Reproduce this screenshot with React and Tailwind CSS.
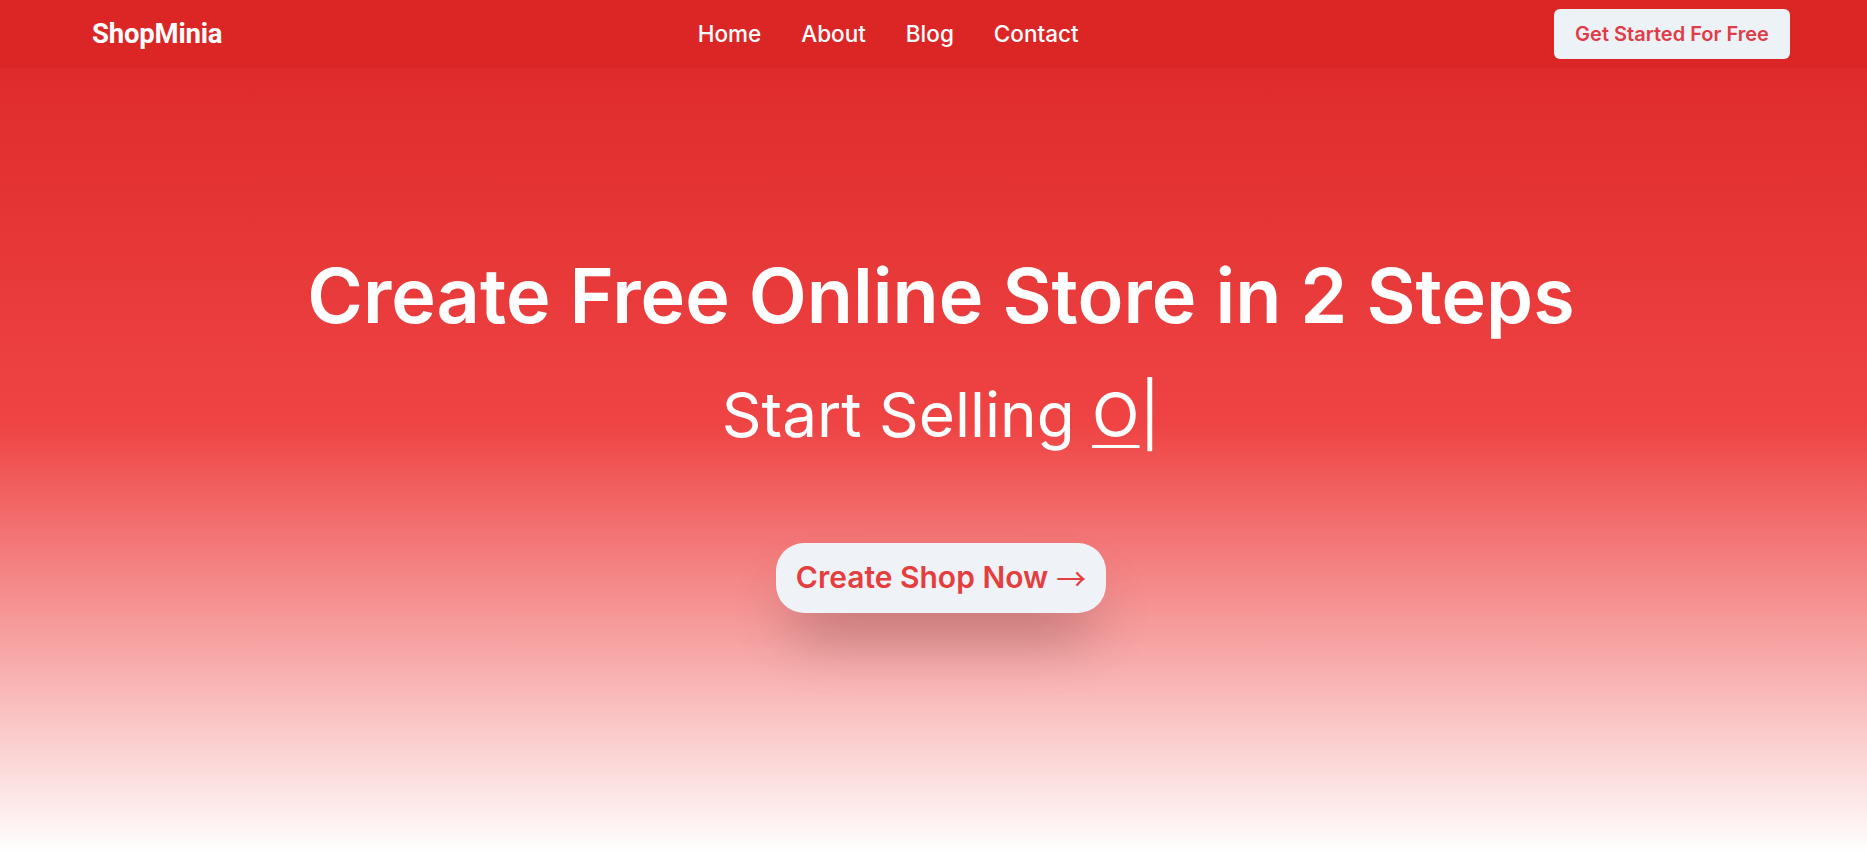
export default function App() {
  return (
    <div
      className="min-h-screen h-[853px] w-full flex flex-col bg-linear-to-b/srgb from-[#dc2626] via-[#ef4444] to-white"
      style={{ fontFamily: "Inter, 'Noto Sans', sans-serif" }}
    >
      <nav className="h-[68px] bg-[#dc2626] shrink-0">
        <div className="h-full pl-[92px] pr-[77px] flex items-center justify-between">
          <a className="text-white font-bold text-[27.5px] tracking-[-0.2px]" style={{ fontFamily: "Roboto, 'Liberation Sans', sans-serif" }}>
            ShopMinia
          </a>
          <ul className="flex items-center gap-[40px] text-white text-[22.5px] font-medium">
            <li>Home</li>
            <li>About</li>
            <li>Blog</li>
            <li>Contact</li>
          </ul>
          <button className="h-[50px] w-[236px] rounded-md bg-[#edf2f7] text-[#e03c48] text-[20px] font-semibold flex items-center justify-center">
            Get Started For Free
          </button>
        </div>
      </nav>
      <main className="pl-[92px] pr-[77px] flex flex-col items-center text-white">
        <h1 className="mt-[190px] text-[75.5px] leading-none font-semibold">
          Create Free Online Store in 2 Steps
        </h1>
        <p className="mt-[50px] text-[62px] leading-none font-normal">
          Start Selling <span className="underline decoration-[3px] underline-offset-[8px]">O</span>
          <span>|</span>
        </p>
        <button className="mt-[97px] h-[70px] px-[20px] rounded-[28px] bg-[#eff3f8] text-[#e53e3e] text-[30px] font-semibold flex items-center gap-[8px] shadow-[0_35px_60px_-15px_rgba(0,0,0,0.3)]">
          <span>Create Shop Now</span>
          <span className="font-normal" style={{ fontFamily: "'Noto Sans CJK SC', 'DejaVu Sans', sans-serif" }}>→</span>
        </button>
      </main>
    </div>
  );
}
